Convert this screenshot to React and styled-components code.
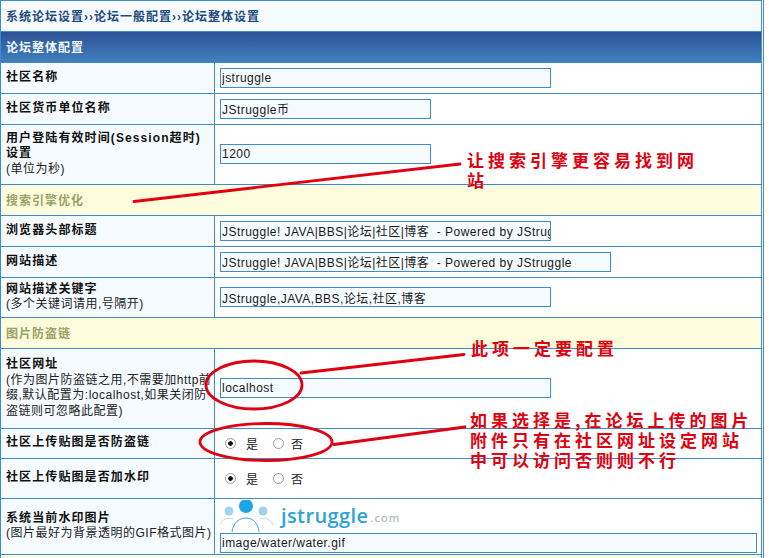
import React from "react";
import styled, { createGlobalStyle } from "styled-components";

const Global = createGlobalStyle`
  html, body { margin: 0; padding: 0; background: #fff; overflow: hidden; height: 558px; }
  * { box-sizing: border-box; }
`;

const LINE = "#3f8bcf";
const FONT = `"Liberation Sans", "Noto Sans CJK SC", sans-serif`;

const Frame = styled.div`
  position: relative;
  width: 764px;
  height: 558px;
  overflow: hidden;
  border-right: 1px solid ${LINE};
  padding-right: 1px;
  font-family: ${FONT};
`;

const Table = styled.table`
  width: 762px;
  table-layout: fixed;
  border-collapse: separate;
  border-spacing: 0;
  border-top: 1px solid ${LINE};
  border-left: 1px solid ${LINE};
  border-right: 1px solid ${LINE};
  font-size: 12px;
  color: #111;
`;

const LabelCol = styled.col`
  width: 214px;
`;

const BandCell = styled.td`
  height: ${(p) => p.$h || 31}px;
  padding: 0 0 1px 5px;
  border-bottom: 1px solid ${LINE};
  font-weight: bold;
  font-size: 12px;
  letter-spacing: 1px;
`;

const Crumb = styled(BandCell)`
  background: #f6fbff;
  color: #1f4a80;
`;

const Header = styled(BandCell)`
  background: linear-gradient(#2d5296, #4180bd);
  color: #f2f7fc;
`;

const Section = styled(BandCell)`
  background: #fdfcdc;
  color: #99a268;
`;

const Label = styled.td`
  height: ${(p) => p.$h || 31}px;
  padding: 0 0 1px 5px;
  background: #f6fbff;
  border-right: 1px solid ${LINE};
  border-bottom: 1px solid ${LINE};
  line-height: 15.5px;
  vertical-align: middle;
  letter-spacing: 0.5px;
  white-space: nowrap;
  overflow: hidden;
  color: #222;
`;

const Title = styled.strong`
  display: block;
  font-weight: bold;
  letter-spacing: 1.1px;
  color: #111;
`;

const Value = styled.td`
  padding: 0 0 1px 5px;
  background: #fff;
  border-bottom: 1px solid ${LINE};
  vertical-align: middle;
`;

const Field = styled.input`
  display: block;
  width: ${(p) => p.$w}px;
  height: 20px;
  padding: 0 0 0 1px;
  margin: 0;
  border: 1px solid ${LINE};
  border-radius: 0;
  outline: none;
  background: #f5fbff;
  font-family: ${FONT};
  font-size: 12px;
  letter-spacing: 0.47px;
  color: #1a1a1a;
`;

const RadioRow = styled.div`
  display: flex;
  align-items: center;
  padding-left: 5px;
  font-size: 12px;
  color: #222;
`;

const Radio = styled.input.attrs({ type: "radio" })`
  appearance: none;
  width: 11px;
  height: 11px;
  margin: 0 ${(p) => p.$after}px 0 0;
  border: 1px solid #9a9a9a;
  border-radius: 50%;
  background: ${(p) =>
    p.checked
      ? "radial-gradient(circle, #111 0 2px, #fff 2.6px)"
      : "#fff"};
`;

const RadioText = styled.span`
  margin-right: ${(p) => p.$gap || 0}px;
`;

const Logo = styled.div`
  display: flex;
  align-items: flex-end;
  height: 33px;
  margin-bottom: 1px;
`;

const LogoWord = styled.span`
  margin-left: 7px;
  padding-bottom: 2px;
  font-family: "Open Sans", sans-serif;
  font-size: 20px;
  line-height: 29px;
  letter-spacing: 0.4px;
  font-weight: 600;
  color: #2ba3d8;
`;

const LogoTld = styled.span`
  font-family: "Open Sans", sans-serif;
  font-size: 11px;
  line-height: 28px;
  letter-spacing: 1px;
  font-weight: 600;
  color: #b4bdc4;
  margin-left: 2px;
`;

const Ink = styled.svg`
  position: absolute;
  left: 0;
  top: 0;
  pointer-events: none;
`;

const Note = styled.div`
  position: absolute;
  left: ${(p) => p.$x}px;
  top: ${(p) => p.$y}px;
  white-space: nowrap;
  font-family: "Noto Sans CJK SC", sans-serif;
  font-size: 17px;
  font-weight: 700;
  line-height: 20px;
  letter-spacing: 4px;
  color: #e0000f;
  pointer-events: none;
`;

const Row = ({ h, title, hint, children }) => (
  <tr>
    <Label $h={h}>
      <Title>{title}</Title>
      {hint}
    </Label>
    <Value>{children}</Value>
  </tr>
);

const Choice = () => (
  <RadioRow>
    <Radio checked readOnly $after={10} />
    <RadioText $gap={15}>是</RadioText>
    <Radio readOnly $after={7} />
    <RadioText>否</RadioText>
  </RadioRow>
);

const Field2 = ({ w, v }) => <Field $w={w} value={v} readOnly />;

const PeopleMark = () => (
  <svg width="54" height="32" viewBox="0 0 54 32" fill="none">
    <circle cx="9" cy="11" r="4.5" fill="#9fd4f0" />
    <circle cx="26" cy="6" r="7" fill="#1ba6e6" />
    <circle cx="43" cy="11" r="4.5" fill="#9fd4f0" />
    <path d="M0 25C2 19 8 17 13 19" stroke="#b9dcee" />
    <path d="M40 19C46 17 51 20 53 25" stroke="#b9dcee" />
    <path d="M12 32C13 22 20 18 26 18C32 18 38 22 39 32" stroke="#3ba5d6" />
  </svg>
);

export default function App() {
  return (
    <Frame>
      <Global />
      <Table>
        <colgroup>
          <LabelCol />
          <col />
        </colgroup>
        <tbody>
          <tr><Crumb colSpan={2} $h={31}>系统论坛设置››论坛一般配置››论坛整体设置</Crumb></tr>
          <tr><Header colSpan={2}>论坛整体配置</Header></tr>
          <Row title="社区名称"><Field2 w={331} v="jstruggle" /></Row>
          <Row title="社区货币单位名称"><Field2 w={211} v="JStruggle币" /></Row>
          <Row h={60} title={<>用户登陆有效时间(Session超时)<br />设置</>} hint="(单位为秒)"><Field2 w={211} v="1200" /></Row>
          <tr><Section colSpan={2}>搜索引擎优化</Section></tr>
          <Row title="浏览器头部标题"><Field2 w={331} v="JStruggle! JAVA|BBS|论坛|社区|博客  - Powered by JStruggle" /></Row>
          <Row title="网站描述"><Field2 w={391} v="JStruggle! JAVA|BBS|论坛|社区|博客  - Powered by JStruggle" /></Row>
          <Row h={40} title="网站描述关键字" hint="(多个关键词请用,号隔开)"><Field2 w={331} v="JStruggle,JAVA,BBS,论坛,社区,博客" /></Row>
          <tr><Section colSpan={2}>图片防盗链</Section></tr>
          <Row h={80} title="社区网址" hint={<>(作为图片防盗链之用,不需要加http前<br />缀,默认配置为:localhost,如果关闭防<br />盗链则可忽略此配置)</>}><Field2 w={331} v="localhost" /></Row>
          <Row h={30} title="社区上传贴图是否防盗链"><Choice /></Row>
          <Row h={40} title="社区上传贴图是否加水印"><Choice /></Row>
          <Row h={56} title="系统当前水印图片" hint="(图片最好为背景透明的GIF格式图片)">
            <Logo>
              <PeopleMark />
              <LogoWord>jstruggle</LogoWord>
              <LogoTld>.com</LogoTld>
            </Logo>
            <Field2 w={537} v="image/water/water.gif" />
          </Row>
          <tr><Section colSpan={2} /></tr>
        </tbody>
      </Table>
      <Ink width="769" height="558" viewBox="0 0 769 558" fill="none" stroke="#e00012" strokeLinecap="round">
        <path d="M134 201.5L460 164" strokeWidth="2.8" />
        <path d="M301 373L464 354.5" strokeWidth="2.8" />
        <path d="M334 444.5L465 427" strokeWidth="2.8" />
        <ellipse cx="254" cy="385" rx="48" ry="24" strokeWidth="2.8" />
        <ellipse cx="266" cy="442" rx="66" ry="18.5" strokeWidth="2.8" />
      </Ink>
      <Note $x={467} $y={150}>让搜索引擎更容易找到网<br />站</Note>
      <Note $x={471} $y={338}>此项一定要配置</Note>
      <Note $x={470} $y={410}>如果选择是,在论坛上传的图片<br />附件只有在社区网址设定网站<br />中可以访问否则则不行</Note>
    </Frame>
  );
}
